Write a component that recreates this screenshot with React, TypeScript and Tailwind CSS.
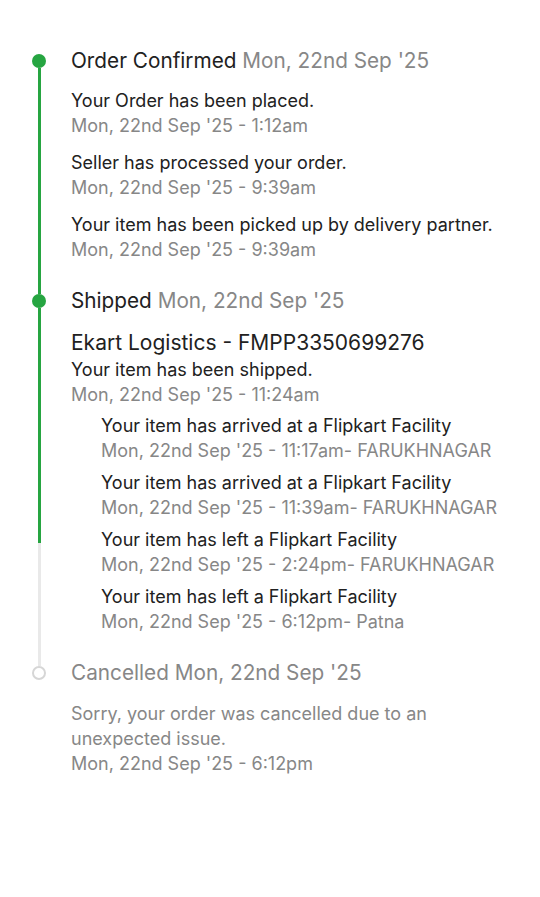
const DATE = "Mon, 22nd Sep '25";

type Update = { text: string; time: string };

const confirmed: Update[] = [
  { text: 'Your Order has been placed.', time: `${DATE} - 1:12am` },
  { text: 'Seller has processed your order.', time: `${DATE} - 9:39am` },
  { text: 'Your item has been picked up by delivery partner.', time: `${DATE} - 9:39am` },
];

const facility: Update[] = [
  { text: 'Your item has arrived at a Flipkart Facility', time: `${DATE} - 11:17am- FARUKHNAGAR` },
  { text: 'Your item has arrived at a Flipkart Facility', time: `${DATE} - 11:39am- FARUKHNAGAR` },
  { text: 'Your item has left a Flipkart Facility', time: `${DATE} - 2:24pm- FARUKHNAGAR` },
  { text: 'Your item has left a Flipkart Facility', time: `${DATE} - 6:12pm- Patna` },
];

function UpdateRow({ u }: { u: Update }) {
  return (
    <div className="text-[18px] leading-[25px]">
      <p className="text-[#212121]">{u.text}</p>
      <p className="text-[#878787]">{u.time}</p>
    </div>
  );
}

export default function App() {
  return (
    <main
      className="min-h-screen bg-white pt-[47px] pl-[32px] pr-[26px]"
      style={{ fontFamily: 'Inter, "Noto Sans", sans-serif' }}
    >
      {/* Order Confirmed */}
      <section className="flex gap-[25px]">
        <div className="flex w-[14px] flex-col items-center">
          <div className="h-[7px]" />
          <div className="h-[14px] w-[14px] rounded-full bg-[#26a541]" />
          <div className="w-[3px] flex-1 bg-[#26a541]" />
        </div>
        <div className="flex-1 pb-[25px]">
          <h2 className="text-[20.75px] leading-[28px] text-[#212121]">
            Order Confirmed <span className="text-[#878787]">{DATE}</span>
          </h2>
          <div className="mt-[13px] flex flex-col gap-[12px]">
            {confirmed.map((u, i) => (
              <UpdateRow key={i} u={u} />
            ))}
          </div>
        </div>
      </section>

      {/* Shipped */}
      <section className="flex gap-[25px]">
        <div className="flex w-[14px] flex-col items-center">
          <div className="h-[7px] w-[3px] bg-[#26a541]" />
          <div className="h-[14px] w-[14px] rounded-full bg-[#26a541]" />
          <div className="h-[235px] w-[3px] bg-[#26a541]" />
          <div className="w-[3px] flex-1 bg-[#e9e9e9]" />
        </div>
        <div className="flex-1 pb-[25px]">
          <h2 className="text-[20.75px] leading-[28px] text-[#212121]">
            Shipped <span className="text-[#878787]">{DATE}</span>
          </h2>
          <p className="mt-[14px] text-[21px] leading-[28px] text-[#212121]">Ekart Logistics - FMPP3350699276</p>
          <UpdateRow u={{ text: 'Your item has been shipped.', time: `${DATE} - 11:24am` }} />
          <div className="mt-[6px] flex flex-col gap-[7px] pl-[30px]">
            {facility.map((u, i) => (
              <UpdateRow key={i} u={u} />
            ))}
          </div>
        </div>
      </section>

      {/* Cancelled */}
      <section className="flex gap-[25px]">
        <div className="flex w-[14px] flex-col items-center">
          <div className="h-[7px] w-[3px] bg-[#e9e9e9]" />
          <div className="h-[14px] w-[14px] rounded-full border-2 border-[#d6d6d6] bg-white" />
        </div>
        <div className="flex-1">
          <h2 className="text-[20.75px] leading-[28px] text-[#878787]">Cancelled {DATE}</h2>
          <div className="mt-[14px] text-[18px] leading-[25px] text-[#878787]">
            <p>Sorry, your order was cancelled due to an unexpected issue.</p>
            <p>{DATE} - 6:12pm</p>
          </div>
        </div>
      </section>
    </main>
  );
}
